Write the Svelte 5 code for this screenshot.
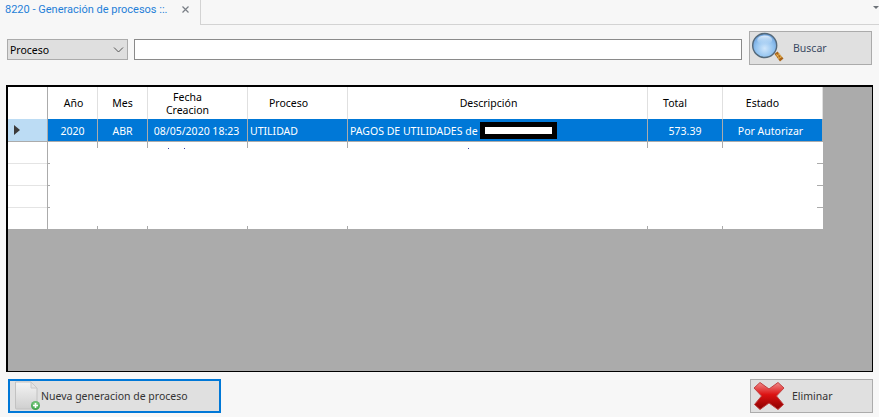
<script>
  const cols = [
    { w: 50, head: ['Año'], val: '2020', cls: 'c', hx: 1, vx: 0 },
    { w: 50, head: ['Mes'], val: 'ABR', cls: 'c', hx: 0, vx: 0 },
    { w: 100, head: ['Fecha', 'Creacion'], val: '08/05/2020 18:23', cls: 'c', hx: -10, vx: -1 },
    { w: 100, head: ['Proceso'], val: 'UTILIDAD', cls: 'l', hx: -9, vx: 0 },
    { w: 300, head: ['Descripción'], val: 'PAGOS DE UTILIDADES de', cls: 'l', hx: -9, vx: 0, redacted: true },
    { w: 75, head: ['Total'], val: '573.39', cls: 'c', hx: -10, vx: 0 },
    { w: 100, head: ['Estado'], val: 'Por Autorizar', cls: 'c', hx: -10, vx: -2 }
  ];
  const tickX = [47, 97, 147, 247, 347, 647, 722];
  const tickY = [163, 185, 207];
  const specks = [168, 184, 468];
</script>

<div class="page">
  <div class="tabs">
    <div class="tab">
      <span class="tab-title">8220 - Generación de procesos ::.</span>
      <svg class="x" width="9" height="9" viewBox="0 0 9 9"><path d="M1.500 1.500l6 6M7.500 1.500l-6 6" stroke="#7a7f86" stroke-width="1.200" fill="none"/></svg>
    </div>
    <div class="tab-rest">
      <svg class="drop" width="6" height="3" viewBox="0 0 6 3"><path d="M0 0h6L3 3z" fill="#6d7278"/></svg>
    </div>
  </div>

  <div class="search">
    <div class="select">
      <span>Proceso</span>
      <svg width="11" height="6" viewBox="0 0 11 6"><path d="M1 .5l4.500 4.500L10 .5" stroke="#555" stroke-width="1" fill="none"/></svg>
    </div>
    <div class="input"></div>
    <div class="btn buscar">
      <svg class="ico" width="34" height="32" viewBox="0 0 34 32">
        <defs>
          <radialGradient id="lens" cx="50%" cy="62%" r="60%">
            <stop offset="0" stop-color="#cfe6fb"/>
            <stop offset="0.6" stop-color="#94c4f0"/>
            <stop offset="1" stop-color="#6a9fdb"/>
          </radialGradient>
          <linearGradient id="shine" x1="0" y1="0" x2="0" y2="1">
            <stop offset="0" stop-color="#eef6fd" stop-opacity=".9"/>
            <stop offset="1" stop-color="#a9cff3" stop-opacity=".2"/>
          </linearGradient>
        </defs>
        <path d="M22.500 22l3-2.500 6 7-3.500 3z" fill="#a9641a"/>
        <path d="M24.500 22l2.500 4M26.700 21l2.500 4M24 24.500l4-2.500M26 27l4-2.500" stroke="#f0c060" stroke-width=".8" fill="none"/>
        <circle cx="12.700" cy="13.500" r="12" fill="url(#lens)" stroke="#54697a" stroke-width="1.400"/>
        <ellipse cx="12.700" cy="8" rx="7.500" ry="4.500" fill="url(#shine)"/>
      </svg>
      <span class="btn-label buscar-label">Buscar</span>
    </div>
  </div>

  <div class="grid">
    <div class="table">
      <div class="row head">
        <div class="rh"></div>
        {#each cols as col}
          <div class="cell" style="width:{col.w}px">
            <div class="head-text" style="transform:translateX({col.hx}px)">
              {#each col.head as line}<div>{line}</div>{/each}
            </div>
          </div>
        {/each}
      </div>
      <div class="row sel">
        <div class="rh">
          <svg width="8" height="10" viewBox="0 0 8 10"><path d="M1 0l6 5-6 5z" fill="#3c3c3c"/></svg>
        </div>
        {#each cols as col}
          <div class="cell {col.cls}" style="width:{col.w}px">
            <span style="transform:translateX({col.vx}px)">{col.val}</span>
            {#if col.redacted}<span class="redact"><i></i></span>{/if}
          </div>
        {/each}
      </div>
      <div class="empty">
        {#each tickX as x}
          <i class="vt top" style="left:{x - 8}px"></i>
          <i class="vt bottom" style="left:{x - 8}px"></i>
        {/each}
        {#each tickY as y}
          <i class="ht left" style="top:{y - 142}px"></i>
          <i class="ht right" style="top:{y - 142}px"></i>
          <i class="rl" style="top:{y - 142}px"></i>
        {/each}
        {#each specks as x}
          <i class="speck" style="left:{x - 8}px"></i>
        {/each}
        <i class="rh-line"></i>
      </div>
    </div>
  </div>

  <div class="footer">
    <div class="btn nueva">
      <svg class="doc" width="25" height="30" viewBox="0 0 25 30">
        <defs>
          <linearGradient id="paper" x1="0" y1="0" x2="0" y2="1">
            <stop offset="0" stop-color="#f4f4f4"/>
            <stop offset="1" stop-color="#cfcfcf"/>
          </linearGradient>
          <radialGradient id="plus" cx="50%" cy="35%" r="70%">
            <stop offset="0" stop-color="#8fd48f"/>
            <stop offset="1" stop-color="#2f9a3f"/>
          </radialGradient>
        </defs>
        <path d="M.500 1H16l6 6v20q0 1-1 1H1.500q-1 0-1-1z" fill="url(#paper)" stroke="#c2c2c2"/>
        <path d="M16 1v6h6z" fill="#e4e4e4" stroke="#c8c8c8"/>
        <circle cx="20.500" cy="24.500" r="4.500" fill="url(#plus)"/>
        <path d="M20.500 22v5M18 24.500h5" stroke="#fff" stroke-width="1.500"/>
      </svg>
      <span class="btn-label">Nueva generacion de proceso</span>
    </div>
    <div class="btn eliminar">
      <svg class="ico-x" width="32" height="30" viewBox="0 0 32 30">
        <defs>
          <linearGradient id="red" x1="0" y1="0" x2="0" y2="1">
            <stop offset="0" stop-color="#f08a8a"/>
            <stop offset="0.45" stop-color="#dc1212"/>
            <stop offset="1" stop-color="#8a0000"/>
          </linearGradient>
        </defs>
        <path d="M7 1.500L16 8 25 1.500 31 7 23.500 15 30.500 23.500 25 28.500 16 22 7 28.500 1.500 23.500 8.500 15 1 7z" fill="url(#red)" stroke="#c04040" stroke-width="1" stroke-linejoin="round"/>
      </svg>
      <span class="btn-label">Eliminar</span>
    </div>
  </div>
</div>

<style>
  :global(body) { margin: 0; background: #f7f7f7; }
  .page {
    width: 879px;
    height: 417px;
    overflow: hidden;
    background: #f7f7f7;
    font-family: "Noto Sans", sans-serif;
    font-size: 10.5px;
    color: #000;
  }
  .tabs { display: flex; height: 25px; }
  .tab {
    width: 201px;
    flex: none;
    display: flex;
    align-items: center;
    padding: 0 10px 7px 5px;
    box-sizing: border-box;
    justify-content: space-between;
    border-right: 1px solid #d3d3d3;
  }
  .tab-title {
    font-family: Roboto, sans-serif;
    font-size: 11px;
    color: #1f7fd8;
    white-space: nowrap;
  }
  .tab-rest {
    flex: 1;
    border-bottom: 1px solid #d3d3d3;
    display: flex;
    justify-content: flex-end;
    padding: 6px 0 0;
    align-items: flex-start;
  }
  .search {
    display: flex;
    align-items: flex-start;
    height: 34px;
    margin-top: 6px;
    padding-left: 7px;
  }
  .select {
    width: 121px;
    height: 21px;
    margin-top: 8px;
    box-sizing: border-box;
    border: 1px solid #ababab;
    background: #dfdfdf;
    display: flex;
    align-items: center;
    justify-content: space-between;
    padding: 0 3px 0 2px;
  }
  .input {
    width: 608px;
    height: 21px;
    margin-top: 8px;
    box-sizing: border-box;
    margin-left: 6px;
    border: 1px solid #8a8a8a;
    background: #fff;
  }
  .btn {
    box-sizing: border-box;
    background: #e0e0e0;
    border: 1px solid #ababab;
    display: flex;
    align-items: center;
  }
  .btn-label { color: #333; white-space: nowrap; }
  .buscar { width: 123px; height: 34px; margin-left: 7px; padding-left: 2px; }
  .buscar-label { margin-left: 7px; color: #3b4a63; }
  .grid {
    box-sizing: border-box;
    width: 867px;
    height: 287px;
    margin: 20px 0 0 6px;
    border: 2px solid #000;
    border-width: 2px 1px 1px 2px;
    background: #ababab;
  }
  .table { width: 815px; }
  .row { display: flex; }
  .rh {
    width: 40px;
    flex: none;
    box-sizing: border-box;
    display: flex;
    align-items: center;
    padding-left: 5px;
  }
  .head { height: 32px; background: #fff; }
  .head .rh { border-right: 1px solid #ababab; }
  .head .cell {
    box-sizing: border-box;
    border-right: 1px solid #e0e0e0;
    padding-top: 1px;
    display: flex;
    align-items: center;
    justify-content: center;
  }
  .head-text { text-align: center; line-height: 13px; }
  .sel { height: 23px; background: #0078d7; color: #fff; border-bottom: 1px solid #ababab; box-sizing: border-box; }
  .sel .rh { background: #bcdcf4; height: 22px; border-right: 1px solid #ababab; }
  .sel .cell {
    box-sizing: border-box;
    height: 22px;
    border-right: 1px solid #ababab;
    display: flex;
    align-items: center;
    white-space: nowrap;
    padding: 1px 2px 0;
  }
  .sel .c { justify-content: center; }
  .redact {
    display: block;
    box-sizing: border-box;
    width: 77px;
    height: 17px;
    margin-left: 2px;
    margin-top: -1px;
    background: #000;
    padding: 5px;
    flex: none;
  }
  .redact i { display: block; height: 7px; background: #fff; }
  .empty {
    position: relative;
    height: 87px;
    background: #fff;
  }
  .vt { position: absolute; width: 1px; background: #ababab; }
  .vt.top { top: 0; height: 6px; }
  .vt.bottom { bottom: 0; height: 3px; }
  .ht { position: absolute; height: 1px; background: #ababab; }
  .ht.left { left: 39px; width: 3px; }
  .ht.right { right: 0; width: 6px; }
  .rl { position: absolute; left: 0; width: 39px; height: 1px; background: #e4e4e4; }
  .rh-line { position: absolute; left: 39px; top: 0; bottom: 0; width: 1px; background: #ababab; }
  .speck { position: absolute; top: 6px; width: 1px; height: 1px; background: #3a3aa0; }
  .footer {
    display: flex;
    justify-content: space-between;
    padding: 7px 6px 0 8px;
  }
  .nueva {
    width: 213px;
    height: 34px;
    border: 2px solid #0078d7;
    padding-left: 5px;
  }
  .nueva .btn-label { margin-left: 1px; }
  .eliminar { width: 123px; height: 34px; padding-left: 2px; }
  .eliminar .btn-label { margin-left: 7px; }
</style>
